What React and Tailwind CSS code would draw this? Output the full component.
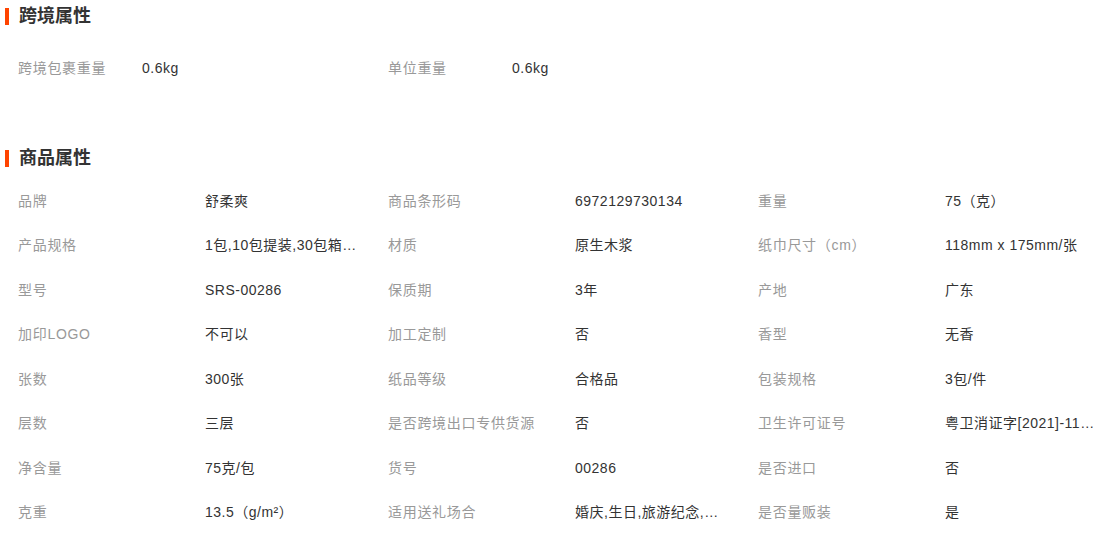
import React from "react";

const cross = [
  ["跨境包裹重量", "0.6kg"],
  ["单位重量", "0.6kg"],
];

const props = [
  ["品牌", "舒柔爽"], ["商品条形码", "6972129730134"], ["重量", "75（克）"],
  ["产品规格", "1包,10包提装,30包箱装,60包箱装"], ["材质", "原生木浆"], ["纸巾尺寸（cm）", "118mm x 175mm/张"],
  ["型号", "SRS-00286"], ["保质期", "3年"], ["产地", "广东"],
  ["加印LOGO", "不可以"], ["加工定制", "否"], ["香型", "无香"],
  ["张数", "300张"], ["纸品等级", "合格品"], ["包装规格", "3包/件"],
  ["层数", "三层"], ["是否跨境出口专供货源", "否"], ["卫生许可证号", "粤卫消证字[2021]-11-第0123号"],
  ["净含量", "75克/包"], ["货号", "00286"], ["是否进口", "否"],
  ["克重", "13.5（g/m²）"], ["适用送礼场合", "婚庆,生日,旅游纪念,商务"], ["是否量贩装", "是"],
];

function Heading({ title }) {
  return (
    <div className="flex h-[32px] items-center">
      <div className="ml-[5px] h-[17px] w-[4px] bg-[#ff4400]" />
      <div className="ml-[10px] text-[18px] font-bold text-[#333]">{title}</div>
    </div>
  );
}

export default function App() {
  return (
    <div
      className="w-[1107px] h-[542px] overflow-hidden bg-white text-[14px]"
      style={{ fontFamily: '"Liberation Sans", "Noto Sans CJK SC", sans-serif' }}
    >
      <Heading title="跨境属性" />
      <div className="grid grid-cols-[370px_370px_370px] pl-[18px] pt-[14px]">
        {cross.map(([k, v]) => (
          <div key={k} className="flex h-[44px] items-center">
            <div className="w-[124px] shrink-0 tracking-[0.7px] text-[#999]">{k}</div>
            <div className="tracking-[0.5px] text-[#333]">{v}</div>
          </div>
        ))}
      </div>
      <div className="mt-[52px]">
        <Heading title="商品属性" />
      </div>
      <div className="grid grid-cols-[370px_370px_370px] pl-[18px] pt-[5px]">
        {props.map(([k, v], i) => (
          <div key={i} className="flex h-[44.5px] items-center">
            <div className="w-[187px] shrink-0 whitespace-nowrap tracking-[0.7px] text-[#999]">{k}</div>
            <div className="max-w-[152px] truncate tracking-[0.5px] text-[#333]">{v}</div>
          </div>
        ))}
      </div>
    </div>
  );
}
